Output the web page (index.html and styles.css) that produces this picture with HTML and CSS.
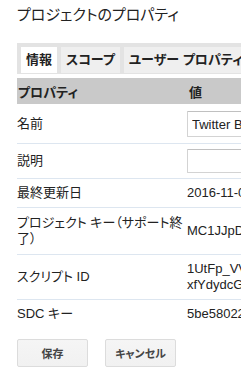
FILE: index.html
```html
<!DOCTYPE html>
<html lang="ja">
<head>
<meta charset="utf-8">
<title>プロジェクトのプロパティ</title>
<link rel="stylesheet" href="styles.css">
</head>
<body>
<div class="dialog">
  <h1 class="title">プロジェクトのプロパティ</h1>
  <div class="tabs">
    <div class="tab active">情報</div>
    <div class="tab">スコープ</div>
    <div class="tab">ユーザー プロパティ</div>
    <div class="tab">スクリプト プロパティ</div>
  </div>
  <table class="props">
    <thead>
      <tr><th class="c-name">プロパティ</th><th class="c-val">値</th></tr>
    </thead>
    <tbody>
      <tr class="row-field1"><td class="c-name">名前</td><td class="c-val"><input class="field" type="text" value="Twitter Bot"></td></tr>
      <tr class="row-field2"><td class="c-name">説明</td><td class="c-val"><input class="field field-sm" type="text" value=""></td></tr>
      <tr><td class="c-name">最終更新日</td><td class="c-val">2016-11-09 19:12:30</td></tr>
      <tr class="row-tall"><td class="c-name">プロジェクト キー（サポート終了）</td><td class="c-val">MC1JJpDqR7wXk2LmN9sTbV4hY8eZ3aUo</td></tr>
      <tr><td class="c-name">スクリプト ID</td><td class="c-val">1UtFp_VVqK3aZ0mN8rT2yL6wB4hJ9sD7<wbr>xfYdydcGe5Pk1QoW</td></tr>
      <tr class="row-last"><td class="c-name">SDC キー</td><td class="c-val">5be58022b3c14f6a9d7e</td></tr>
    </tbody>
  </table>
  <div class="actions">
    <button class="btn" type="button">保存</button>
    <button class="btn" type="button">キャンセル</button>
  </div>
</div>
</body>
</html>
```

FILE: styles.css
```css
html, body {
  margin: 0;
  padding: 0;
  background: #fff;
}
body {
  font-family: "Liberation Sans", "Noto Sans CJK JP", sans-serif;
  font-feature-settings: "palt";
  color: #222;
  overflow: hidden;
}
.dialog {
  width: 460px;
  padding-left: 17px;
}
.title {
  margin: 0;
  padding-top: 5px;
  font-size: 15px;
  line-height: 20px;
  font-weight: normal;
  color: #222;
}
.tabs {
  margin-top: 18px;
  height: 31px;
  box-sizing: border-box;
  padding: 0 0 1px 4px;
  background: #e3e3e3;
  display: flex;
  align-items: flex-end;
  gap: 4px;
}
.tab {
  height: 26px;
  line-height: 26px;
  padding: 0 5px;
  background: #efefef;
  font-size: 13px;
  font-weight: bold;
  color: #222;
  white-space: nowrap;
}
.tab.active {
  background: #fff;
}
.props {
  margin-top: 4px;
  border-collapse: collapse;
  font-size: 13px;
}
.props th {
  background: #c9c9c9;
  height: 26px;
  padding: 0 0 0 1px;
  text-align: left;
  font-weight: bold;
  color: #222;
}
.props td {
  padding: 6px 0;
  line-height: 16px;
  border-bottom: 1px solid #dde6f0;
  vertical-align: middle;
}
.props .c-name {
  width: 161px;
  padding-right: 8px;
}
.props .c-val {
  width: 250px;
}
.props th.c-val {
  padding-left: 2px;
}
.props .row-field1 td {
  padding: 7px 0 6px;
}
.props .row-field2 td {
  padding: 5px 0 5px;
}
.props .row-tall td {
  padding: 7px 0;
}
.props .row-last td {
  border-bottom: none;
}
.field {
  display: block;
  box-sizing: border-box;
  width: 260px;
  height: 26px;
  margin: 0;
  padding: 0 4px;
  border: 1px solid #d3d3d3;
  border-top-color: #c0c0c0;
  border-radius: 1px;
  font-family: "Liberation Sans", sans-serif;
  font-size: 13px;
  color: #222;
  background: #fff;
}
.field-sm {
  height: 24px;
}
.actions {
  display: flex;
  gap: 17px;
  margin-top: 11px;
}
.btn {
  box-sizing: border-box;
  min-width: 71px;
  height: 28px;
  padding: 0 8px;
  border: 1px solid #dcdcdc;
  border-radius: 2px;
  background: linear-gradient(#f5f5f5, #f1f1f1);
  font-family: "Liberation Sans", "Noto Sans CJK JP", sans-serif;
  font-feature-settings: "palt";
  font-size: 11px;
  font-weight: bold;
  color: #444;
}
```
